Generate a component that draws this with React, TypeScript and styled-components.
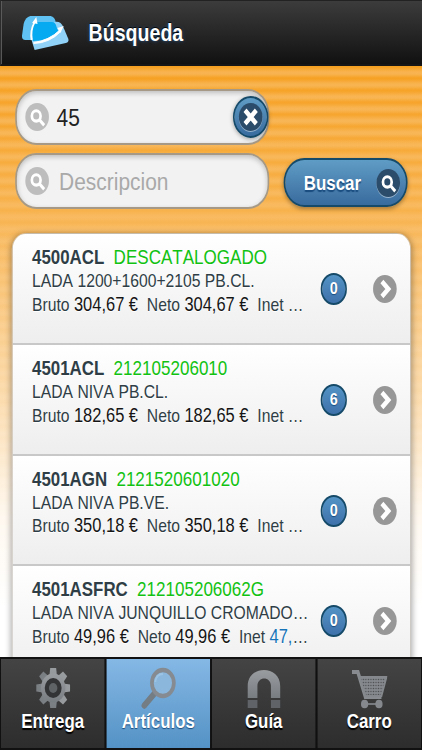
import React from "react";
import styled, { createGlobalStyle, css } from "styled-components";

const GlobalStyle = createGlobalStyle`
  html, body { margin: 0; padding: 0; background: #fff; overflow: hidden; }
  *, *::before, *::after { box-sizing: border-box; }
  button, input { font: inherit; }
`;

/* The interface is laid out on a 500px canvas and condensed to the 422px screen. */
const Viewport = styled.div`
  width: 422px;
  height: 750px;
  overflow: hidden;
`;

const Screen = styled.div`
  width: 500px;
  height: 750px;
  display: flex;
  flex-direction: column;
  transform: scaleX(0.844);
  transform-origin: 0 0;
  font-family: "Liberation Sans", Arial, Helvetica, sans-serif;
  font-kerning: none;
  color: #2f3e46;
`;

const Header = styled.header`
  flex: 0 0 66px;
  display: flex;
  align-items: center;
  padding-left: 24px;
  border: 2px solid #2c2c2c;
  border-top: 1px solid #222;
  border-bottom-color: #161616;
  border-right: 0;
  background: linear-gradient(#3c3c3c, #111);
`;

const Title = styled.h1`
  margin: 0 0 0 23px;
  padding-top: 1px;
  font-size: 23.2px;
  line-height: 28px;
  color: #fff;
  text-shadow: 0 -1px 1px #000, 0 0 4px #24558a;
`;

const Content = styled.main`
  flex: 1;
  min-height: 0;
  overflow: hidden;
  padding: 23px 13px 0 14px;
  background:
    linear-gradient(rgba(255, 255, 255, 0) 150px, rgba(255, 255, 255, 0.52) 335px, rgba(255, 255, 255, 0.9) 450px, #fff 540px),
    linear-gradient(rgba(249, 188, 100, 0) 0, rgba(249, 190, 106, 0.72) 175px),
    repeating-linear-gradient(#f6a021 0, #f6a021 1px, #f8b34f 6px, #f8b34f 8px, #f6a021 12px);
`;

const Form = styled.form`
  display: grid;
  grid-template-columns: 301px 147px;
  grid-template-rows: 56px 56px;
  column-gap: 17px;
  row-gap: 8px;
  padding-left: 4px;
`;

const SearchBox = styled.label`
  grid-column: 1;
  display: flex;
  align-items: center;
  padding-left: 10px;
  border: 2px solid #a69a86;
  border-radius: 25px;
  background: #f2f2f2;
  box-shadow: inset 0 2px 6px rgba(0, 0, 0, 0.22);
`;

const SearchInput = styled.input<{ $indent: number }>`
  flex: 1;
  min-width: 0;
  width: 0;
  height: 40px;
  margin-left: ${(p) => p.$indent}px;
  padding: 2px 0 0;
  border: 0;
  outline: 0;
  background: none;
  font-size: 24.8px;
  color: #222;
  &::placeholder { color: #a9a9a9; opacity: 1; }
`;

const blueFace = css`
  border: 2px solid #164a69;
  background: linear-gradient(#5f9cc5, #396b9e);
  color: #fff;
`;

const Disc = styled.span<{ $tone: "light" | "grey" | "navy" }>`
  flex: none;
  display: flex;
  align-items: center;
  justify-content: center;
  width: 28px;
  height: 28px;
  border-radius: 50%;
  background: ${(p) => ({ light: "#bdbdbd", grey: "#979797", navy: "#2b4c6b" })[p.$tone]};
  box-shadow: ${(p) => (p.$tone === "navy" ? "0 1px 0 rgba(255,255,255,.45)" : "none")};
`;

const ClearButton = styled.button`
  ${blueFace}
  flex: none;
  display: flex;
  align-items: center;
  justify-content: center;
  width: 42px;
  height: 42px;
  padding: 0;
  margin-right: -1px;
  border-radius: 50%;
  box-shadow: 0 1px 5px rgba(0, 0, 0, 0.35);
`;

const SubmitButton = styled.button`
  ${blueFace}
  grid-column: 2;
  grid-row: 2;
  align-self: center;
  height: 49px;
  margin-top: 2px;
  display: flex;
  align-items: center;
  justify-content: space-between;
  padding: 2px 7px 0 22px;
  border-radius: 25px;
  font-size: 20px;
  font-weight: bold;
  text-shadow: 0 2px 1px #194b7e;
  box-shadow: 0 2px 5px rgba(0, 0, 0, 0.35);
`;

const List = styled.ul`
  list-style: none;
  margin: 24px 0 0;
  padding: 0;
  border: 1px solid #c0bcb5;
  border-radius: 16px 16px 0 0;
  overflow: hidden;
  box-shadow: 0 1px 7px rgba(0, 0, 0, 0.35);
`;

const Row = styled.li`
  display: flex;
  height: 110.8px;
  padding: 11px 16px 0 23px;
  border-bottom: 2px solid #c8c8c8;
  background: linear-gradient(#fff, #eee);
  text-shadow: 0 1px 0 #fff;
`;

const Details = styled.div`
  flex: none;
  width: 329px;
`;

const Code = styled.h3`
  margin: 0;
  font-size: 20px;
  line-height: 24px;
  white-space: pre;
`;

const Reference = styled.span`
  margin-left: 11px;
  font-size: 20.2px;
  font-weight: normal;
  color: #12c212;
`;

const Line = styled.p`
  margin: 0;
  font-size: 18.6px;
  line-height: 23.7px;
  white-space: nowrap;
  overflow: hidden;
`;

const Amount = styled.span<{ $link?: boolean }>`
  margin-right: ${(p) => (p.$link ? 0 : 10.5)}px;
  font-size: 19.5px;
  color: ${(p) => (p.$link ? "#1674b8" : "#151515")};
`;

const Badge = styled.span`
  ${blueFace}
  flex: none;
  display: flex;
  align-items: center;
  justify-content: center;
  width: 31px;
  height: 32px;
  margin: 28px 31px 0 13px;
  border-radius: 16px;
  background: linear-gradient(#5393c5, #3e71aa);
  font-size: 17px;
  font-weight: bold;
  line-height: 28px;
  text-shadow: 0 1px 1px #194b7e;
`;

const Arrow = styled.span`
  flex: none;
  margin-top: 30px;
`;

const Footer = styled.nav`
  flex: 0 0 93px;
  display: grid;
  grid-template-columns: repeat(4, 1fr);
  border-top: 2px solid #111;
  background: #111;
`;

const Tab = styled.button<{ $active?: boolean }>`
  display: flex;
  flex-direction: column;
  align-items: center;
  padding: 7px 0 0;
  border: 1px solid #111;
  border-width: 0 1px 2px;
  background: ${(p) => (p.$active ? "linear-gradient(#85b8e5, #5492c5)" : "linear-gradient(#444, #2d2d2d)")};
  color: #fff;
  font-size: 20px;
  font-weight: bold;
  line-height: 22px;
  text-shadow: ${(p) => (p.$active ? "0 1px 1px #194b7e" : "0 2px 1px #000")};
  svg { display: block; }
`;

const SearchGlyph = () => (
  <svg width="19" height="19" viewBox="0 0 18 18" fill="none" stroke="#fff">
    <circle cx="7.5" cy="7.5" r="4.9" strokeWidth="3" />
    <path d="M11 11l5.4 5.4" strokeWidth="3.2" />
  </svg>
);

const CrossGlyph = () => (
  <svg width="18" height="18" viewBox="0 0 18 18">
    <path d="M2.3 2.3l13.4 13.4M15.7 2.3l-13.4 13.4" stroke="#fff" strokeWidth="5" />
  </svg>
);

const ArrowGlyph = () => (
  <svg width="18" height="20" viewBox="0 0 18 20" fill="none">
    <path d="M5.5 2.4l7.6 7.6-7.6 7.6" stroke="#fff" strokeWidth="5" />
  </svg>
);

const Logo = () => (
  <svg width="56" height="36" viewBox="0 0 56 36">
    <path d="M10 1h24q5 1 6 6v18H4q-4 0-4-4L2 9q2-7 8-8z" fill="#5fc2f2" />
    <path d="M39 7q7-1 10 5l6 12q1 3-3 4l-37 7-4-11z" fill="#91d3f8" />
    <path d="M15 7h20q5 0 6 5l2 4Q32 26 13 26L12 10z" fill="#05aaf0" />
    <path d="M11.5 25q-2-9 3.5-18" fill="none" stroke="#fff" strokeWidth="2.2" />
    <path d="M12 8l5-6 1.500 7zM42 13l7.500-2-4 7z" fill="#fff" />
    <path d="M14 27.500q18-2 31-12.500l1 1.500Q33 28 14 28.500z" fill="#fff" stroke="#fff" />
  </svg>
);

const IconGradient = ({ id }: { id: string }) => (
  <linearGradient id={id} x1="0" y1="0" x2="0" y2="1">
    <stop offset="0" stopColor="#9a9da0" />
    <stop offset="1" stopColor="#787d82" />
  </linearGradient>
);

const GearIcon = () => (
  <svg width="42" height="44" viewBox="0 0 42 44">
    <defs><IconGradient id="gear" /></defs>
    <g fill="url(#gear)">
      {[0, 45, 90, 135].map((angle) => (
        <path key={angle} d="M17.5 2h7l1 8v24l-1 8h-7l-1-8V10z" transform={`rotate(${angle} 21 22)`} />
      ))}
      <circle cx="21" cy="22" r="14.5" />
    </g>
    <circle cx="21" cy="22" r="10" fill="#333435" />
    <circle cx="21" cy="22" r="5" fill="#5f6366" />
  </svg>
);

const LensIcon = () => (
  <svg width="42" height="44" viewBox="0 0 42 44">
    <path d="M17.5 26L4 39.500" stroke="#747c84" strokeWidth="6.5" strokeLinecap="round" />
    <circle cx="26" cy="17" r="13" fill="#8bb7dc" stroke="#858b91" strokeWidth="4.4" />
    <path d="M17 16q1-8 9-8" fill="none" stroke="#9dc4e4" strokeWidth="2" />
  </svg>
);

const MagnetIcon = () => (
  <svg width="42" height="44" viewBox="0 0 42 44">
    <defs><IconGradient id="magnet" /></defs>
    <path d="M1.500 32V20C1.500-1.500 40-1.500 40 20v12H29V20c0-10-16-10-16 0v12z" fill="url(#magnet)" />
    <path d="M1.500 34H13v8H1.500zM29 34h11v8H29z" fill="#606367" />
  </svg>
);

const CartIcon = () => (
  <svg width="42" height="44" viewBox="0 0 42 44">
    <defs>
      <pattern id="mesh" width="3" height="3" patternUnits="userSpaceOnUse">
        <rect width="3" height="3" fill="#85898d" />
        <circle cx="1.500" cy="1.500" r=".8" fill="#4d4f51" />
      </pattern>
    </defs>
    <path d="M0 6h7l9 25h19" fill="none" stroke="#888c90" strokeWidth="4" />
    <path d="M9 11h32l-6 19H16z" fill="url(#mesh)" stroke="#85898d" strokeWidth="2" />
    <path d="M16 38h18" stroke="#777b7f" strokeWidth="2" />
    <circle cx="15" cy="38" r="4.300" fill="#85898d" />
    <circle cx="32" cy="38" r="4.300" fill="#85898d" />
  </svg>
);

const articles = [
  { code: "4500ACL", reference: "DESCATALOGADO", name: "LADA 1200+1600+2105 PB.CL.", price: "304,67 €", inet: "", count: 0 },
  { code: "4501ACL", reference: "212105206010", name: "LADA NIVA PB.CL.", price: "182,65 €", inet: "", count: 6 },
  { code: "4501AGN", reference: "2121520601020", name: "LADA NIVA PB.VE.", price: "350,18 €", inet: "", count: 0 },
  { code: "4501ASFRC", reference: "212105206062G", name: "LADA NIVA JUNQUILLO CROMADO…", price: "49,96 €", inet: "47,", count: 0 },
];

const tabs = [
  { label: "Entrega", Icon: GearIcon },
  { label: "Artículos", Icon: LensIcon, active: true },
  { label: "Guía", Icon: MagnetIcon },
  { label: "Carro", Icon: CartIcon },
];

export default function App() {
  return (
    <Viewport>
      <GlobalStyle />
      <Screen>
        <Header>
          <Logo />
          <Title>Búsqueda</Title>
        </Header>
        <Content>
          <Form onSubmit={(e) => e.preventDefault()}>
            <SearchBox>
              <Disc $tone="light"><SearchGlyph /></Disc>
              <SearchInput $indent={9} defaultValue="45" />
              <ClearButton type="button" aria-label="Borrar">
                <Disc $tone="navy"><CrossGlyph /></Disc>
              </ClearButton>
            </SearchBox>
            <SearchBox>
              <Disc $tone="light"><SearchGlyph /></Disc>
              <SearchInput $indent={12} placeholder="Descripcion" />
            </SearchBox>
            <SubmitButton>
              Buscar
              <Disc $tone="navy"><SearchGlyph /></Disc>
            </SubmitButton>
          </Form>
          <List>
            {articles.map((a) => (
              <Row key={a.code}>
                <Details>
                  <Code>{a.code}<Reference>{a.reference}</Reference></Code>
                  <Line>{a.name}</Line>
                  <Line>
                    Bruto <Amount>{a.price}</Amount>Neto <Amount>{a.price}</Amount>Inet{" "}
                    {a.inet && <Amount $link>{a.inet}</Amount>}…
                  </Line>
                </Details>
                <Badge>{a.count}</Badge>
                <Arrow><Disc $tone="grey"><ArrowGlyph /></Disc></Arrow>
              </Row>
            ))}
          </List>
        </Content>
        <Footer>
          {tabs.map(({ label, Icon, active }) => (
            <Tab key={label} $active={active}>
              <Icon />
              {label}
            </Tab>
          ))}
        </Footer>
      </Screen>
    </Viewport>
  );
}
